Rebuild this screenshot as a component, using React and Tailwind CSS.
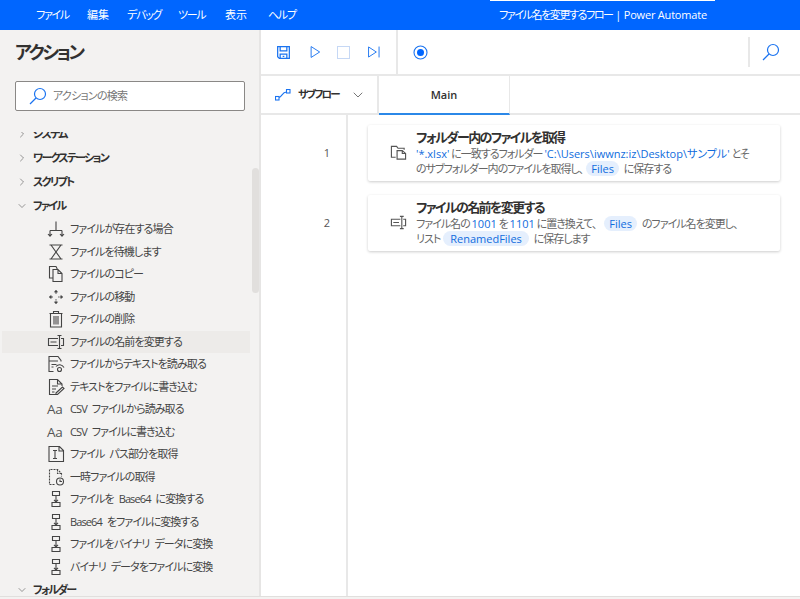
import React from "react";
import { ChevronRight, ChevronDown } from "lucide-react";

const font = "font-['Open_Sans','Noto_Sans_CJK_JP',sans-serif] [font-feature-settings:'palt']";

function Ico({ children, size = 18, className = "text-[#444]", sw = 1.1 }) {
  return (
    <svg
      width={size}
      height={size}
      viewBox="0 0 18 18"
      fill="none"
      stroke="currentColor"
      strokeWidth={sw}
      className={className}
    >
      {children}
    </svg>
  );
}

const Branch = () => (
  <Ico>
    <path d="M9 1.500v9M3 10.500h12M3 10.500V16M15 10.500V16M1 14l2 2.200L5 14M13 14l2 2.200 2-2.200" />
  </Ico>
);
const Hourglass = () => (
  <Ico>
    <path d="M2.500 2h13M2.500 16h13M4 2l10 14M14 2L4 16" />
  </Ico>
);
const Copy = () => (
  <Ico>
    <path d="M6 13H2.500V1.500H9l1.500 3M6 4.500h5l4 4V16.500H6zM11 4.500v4h4" />
  </Ico>
);
const Move = () => (
  <Ico size={16}>
    <path d="M9 4v2.500M9 11.500V14M4 9h2.500M11.500 9H14" strokeDasharray="1.500 1" />
    <path d="M7.500 3.500L9 1.500l1.500 2zM7.500 14.500L9 16.500l1.500-2zM3.500 7.500L1.500 9l2 1.500zM14.500 7.500L16.500 9l-2 1.500z" fill="currentColor" />
  </Ico>
);
const Trash = () => (
  <Ico>
    <path d="M2.500 3.500h13M6.500 3.500V1.500h5v2M3.500 3.500v13.500h11V3.500M7 6v8.500M9 6v8.500M11 6v8.500" />
  </Ico>
);
const Rename = () => (
  <Ico>
    <path d="M11 5.500H1.500v7H11M3.500 9h6M14 5.500h2.500v7H14M12.500 2.500v13M10.500 2.500h4M10.500 15.500h4" />
  </Ico>
);
const ReadText = () => (
  <Ico>
    <path d="M6.500 16.500H2V1.500h9l3 4v1M2 6h9M4.500 9.500h5M4.500 12h2M9 11.500c2-2.500 6-2.500 8 1" />
    <circle cx="12.500" cy="14.500" r="2" />
  </Ico>
);
const WriteText = () => (
  <Ico>
    <path d="M9 16.500H2.500v-15h8l4.500 4.500v2M10.500 1.500V6H15M5 8h6M5 11h4M5 14h2.500M9 15l6.500-6 1.500 1.500-6.500 6H9z" />
  </Ico>
);
const PathPart = () => (
  <Ico>
    <path d="M2 1.500h10.500l4 4v11H2zM12 1.500v4.500h4.500M6 5.500h4M6 13.500h4M8 5.500v8" />
  </Ico>
);
const TempFile = () => (
  <Ico>
    <path d="M7.500 16.500h-5v-15h8l4 4v3M10.500 1.500V5.500h4" strokeDasharray="2 1" />
    <circle cx="13" cy="13.500" r="3.500" />
    <path d="M13 11.500v2h2" />
  </Ico>
);
const Convert = () => (
  <Ico>
    <path d="M5.500 1.500h7v4h-7zM5 12.500h8v4H5zM9 5.500v6.500M7 9.800L9 12l2-2.200" />
  </Ico>
);
const Aa = () => (
  <span className="w-[18px] text-[13.5px] leading-[18px] tracking-[-0.2px] text-[#555] font-['Open_Sans',sans-serif]">Aa</span>
);

const fileItems = [
  [Branch, "ファイルが存在する場合"],
  [Hourglass, "ファイルを待機します"],
  [Copy, "ファイルのコピー"],
  [Move, "ファイルの移動"],
  [Trash, "ファイルの削除"],
  [Rename, "ファイルの名前を変更する", true],
  [ReadText, "ファイルからテキストを読み取る"],
  [WriteText, "テキストをファイルに書き込む"],
  [Aa, "CSV ファイルから読み取る"],
  [Aa, "CSV ファイルに書き込む"],
  [PathPart, "ファイル パス部分を取得"],
  [TempFile, "一時ファイルの取得"],
  [Convert, "ファイルを Base64 に変換する"],
  [Convert, "Base64 をファイルに変換する"],
  [Convert, "ファイルをバイナリ データに変換"],
  [Convert, "バイナリ データをファイルに変換"],
];

function Group({ name, open }) {
  return (
    <div className="flex items-center h-[24px] pl-[16px] gap-[5px]">
      {open ? (
        <ChevronDown size={12} strokeWidth={1.2} className="text-[#555]" />
      ) : (
        <ChevronRight size={12} strokeWidth={1.2} className="text-[#555]" />
      )}
      <span className="text-[11px] tracking-[-1.7px] font-semibold text-[#323130] whitespace-nowrap">{name}</span>
    </div>
  );
}

function Chip({ children, className = "mx-[3px] px-[5px]" }) {
  return (
    <span className={`${className} rounded-full bg-[#e5effd] text-[#0f6cdd] tracking-normal`}>{children}</span>
  );
}

function Blue({ children }) {
  return <span className="text-[#0f6cdd] tracking-normal">{children}</span>;
}

function Card({ icon, num, title, lines, mt }) {
  return (
    <div className={`flex items-start ${mt}`}>
      <div className="w-[85px] pr-[16px] text-right text-[11px] text-[#555] pt-[20px]">{num}</div>
      <div className="ml-[22px] w-[412px] h-[56px] bg-white rounded-[2px] shadow-[0_1px_3px_rgba(0,0,0,0.2)] flex">
        <div className="w-[48px] pl-[22px] pt-[19px]">{icon}</div>
        <div className="pt-[3px]">
          <div className="text-[13px] leading-[18px] tracking-[-1.6px] font-semibold text-[#323130] whitespace-nowrap">{title}</div>
          {lines.map((line, i) => (
            <div key={i} className="text-[11px] leading-[15px] tracking-[-1px] text-[#666] whitespace-nowrap">{line}</div>
          ))}
        </div>
      </div>
    </div>
  );
}

const SearchIcon = () => (
  <svg width="18" height="18" viewBox="0 0 18 18" fill="none" stroke="#1a73f0" strokeWidth="1.200">
    <circle cx="11" cy="7" r="5.500" />
    <path d="M7 11l-6 6" />
  </svg>
);

export default function App() {
  return (
    <div className={`w-[800px] h-[599px] overflow-hidden flex flex-col bg-white ${font}`}>
      <div className="relative h-[30px] bg-[#0066ff] shrink-0 flex items-center text-white text-[11px]">
        <div className="absolute top-0 left-[490px] w-[225px] h-px bg-white" />
        <span className="ml-[36px] w-[51px] tracking-[-1.3px]">ファイル</span>
        <span className="w-[40px]">編集</span>
        <span className="w-[51px] tracking-[-1.3px]">デバッグ</span>
        <span className="w-[47px] tracking-[-1.3px]">ツール</span>
        <span className="w-[43px]">表示</span>
        <span className="w-[231px] tracking-[-1.3px]">ヘルプ</span>
        <span className="whitespace-nowrap tracking-[-1.4px]">
          ファイル名を変更するフロー
          <span className="tracking-[-0.2px]"> | Power Automate</span>
        </span>
      </div>
      <div className="flex flex-1 min-h-0">
        <div className="w-[261px] shrink-0 bg-[#f3f2f1] border-r-2 border-[#e6e5e4] flex flex-col">
          <div className="pl-[15px] pt-[8px] text-[18px] leading-[28px] tracking-[-2.4px] font-semibold text-[#323130]">アクション</div>
          <div className="ml-[15px] w-[230px] mt-[15px] h-[30px] bg-white border border-[#8a8886] rounded-[2px] flex items-center pl-[13px]">
            <SearchIcon />
            <span className="ml-[6px] text-[11px] tracking-[-0.75px] text-[#767676]">アクションの検索</span>
          </div>
          <div className="mt-[21px] flex-1 min-h-0 overflow-hidden relative">
            <div className="-mt-[10px]">
              <Group name="システム" />
              <Group name="ワークステーション" />
              <Group name="スクリプト" />
              <Group name="ファイル" open />
              {fileItems.map(([I, label, on]) => (
                <div
                  key={label}
                  className={`flex items-center h-[22.5px] ml-[2px] w-[248px] pl-[45px] gap-[5px] ${on ? "bg-[#edebe9]" : ""}`}
                >
                  <span className="w-[18px] h-[18px] flex items-center justify-center">
                    <I />
                  </span>
                  <span className="text-[11px] tracking-[-0.9px] [word-spacing:3px] text-[#444] whitespace-nowrap">{label}</span>
                </div>
              ))}
              <Group name="フォルダー" open />
            </div>
            <div className="absolute left-[252px] top-[36px] w-[7px] h-[125px] rounded-full bg-[#e1dfdd]" />
          </div>
        </div>
        <div className="flex-1 flex flex-col min-w-0">
          <div className="h-[46px] shrink-0 flex items-center border-b-2 border-[#e8e8e8]">
            <div className="flex items-center h-full pl-[15px] w-[137px] border-r-2 border-[#e8e8e8]">
              <Ico className="text-[#1a73f0]" sw={1.500} size={15}>
                <path d="M2 2h14v14H4l-2-2zM5 2v5h8V2M5 16v-5h8v5M8 13.500h2" />
              </Ico>
              <Ico className="text-[#1a73f0] ml-[17px]" sw={1.200} size={14}>
                <path d="M4 2l11 7-11 7z" />
              </Ico>
              <span className="w-[13px] h-[13px] ml-[15px] border border-[#c6d8f5]" />
              <Ico className="text-[#1a73f0] ml-[17px]" sw={1.200} size={14}>
                <path d="M2 2.500l10 6.500-10 6.500zM15.500 2v14" />
              </Ico>
            </div>
            <div className="ml-[15px]">
              <svg width="15" height="15" viewBox="0 0 15 15" fill="none" stroke="#1a73f0" strokeWidth="1.100">
                <circle cx="7.500" cy="7.500" r="6.500" />
                <circle cx="7.500" cy="7.500" r="3.500" fill="#0066ff" stroke="none" />
              </svg>
            </div>
            <div className="ml-auto h-[30px] border-l-2 border-[#e8e8e8] pl-[12px] pr-[20px] flex items-center">
              <SearchIcon />
            </div>
          </div>
          <div className="h-[39px] shrink-0 flex border-b-2 border-[#e8e8e8]">
            <div className="w-[118px] border-r-2 border-[#e8e8e8] flex items-center pl-[14px] whitespace-nowrap">
              <svg width="16" height="12" viewBox="0 0 16 12" fill="none" stroke="#1a73f0" strokeWidth="1.100">
                <rect x="0.500" y="7.500" width="3.500" height="3.500" />
                <rect x="11.500" y="0.500" width="3.500" height="3.500" />
                <path d="M4 8.500C7 8 7 3 11.500 3" />
              </svg>
              <span className="ml-[7px] w-[52px] text-[10.500px] tracking-[-1.8px] font-semibold text-[#323130]">サブフロー</span>
              <ChevronDown size={16} strokeWidth={1.1} className="text-[#444]" />
            </div>
            <div className="w-[131px] pt-px border-b-2 -mb-[2px] border-[#2b88e8] border-r border-r-[#e8e8e8] flex items-center justify-center text-[11px] font-semibold text-[#323130]">
              Main
            </div>
          </div>
          <div className="relative flex-1 pt-[10px]">
            <div className="absolute left-[85px] top-0 bottom-0 w-[2px] bg-[#e8e8e8]" />
            <Card
              num="1"
              title="フォルダー内のファイルを取得"
              lines={[
                <><Blue>'*.xlsx'</Blue> に一致するフォルダー <Blue>'C:\Users\iwwnz:iz\Desktop\サンプル'</Blue> とそ</>,
                <>のサブフォルダー内のファイルを取得し、<Chip>Files</Chip> に保存する</>,
              ]}
              icon={
                <Ico size={17} className="text-[#555]" sw={1.200}>
                  <path d="M6 14H1.500V2.500h5.500l1.500 2H15v1.500M7.500 7h5.500l3.500 3v6H7.500zM13 7v3h3.500" />
                </Ico>
              }
            />
            <Card
              num="2"
              mt="mt-[14px]"
              title="ファイルの名前を変更する"
              lines={[
                <>ファイル名の <Blue>1001</Blue> を <Blue>1101</Blue> に置き換えて、<Chip className="ml-[8px] mr-[3px] px-[5px]">Files</Chip> のファイル名を変更し、</>,
                <>リスト <Chip className="ml-[1px] mr-[3px] px-[7px]">RenamedFiles</Chip> に保存します</>,
              ]}
              icon={
                <Ico size={17} className="text-[#555]" sw={1.200}>
                  <path d="M11 5.500H1.500v7H11M3.500 9h6M14 5.500h2.500v7H14M12.500 2.500v13M10.500 2.500h4M10.500 15.500h4" />
                </Ico>
              }
            />
          </div>
        </div>
      </div>
      <div className="h-[3px] shrink-0 bg-[#f3f2f1] border-t border-[#e1dfdd]" />
    </div>
  );
}
